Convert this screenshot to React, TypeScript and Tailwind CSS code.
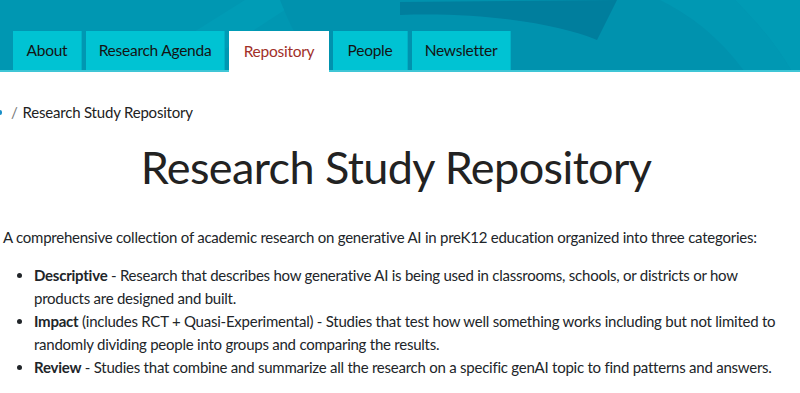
import React from "react";

const tabs = [
  { label: "About", w: "w-[69px]", active: false },
  { label: "Research Agenda", w: "w-[139px]", active: false },
  { label: "Repository", w: "w-[100px]", active: true },
  { label: "People", w: "w-[75px]", active: false },
  { label: "Newsletter", w: "w-[99px]", active: false },
];

function HeaderArt() {
  return (
    <svg className="absolute inset-0 h-full w-full" viewBox="0 0 800 72" preserveAspectRatio="none">
      <rect x="0" y="0" width="800" height="72" fill="#0097b2" />
      <path d="M130 72 L245 0 L300 0 L190 72 Z" fill="#009cb6" />
      <path d="M280 0 C290 25 300 50 330 72 L800 72 L800 0 Z" fill="#0092ae" />
      <path d="M400 2 L617 0 L597 40 C560 25 490 12 400 15 Z" fill="#007e9d" />
      <path d="M660 0 L735 0 C760 25 780 50 792 72 L745 72 C725 45 700 20 660 0 Z" fill="#0098b3" />
      <path d="M735 0 L800 0 L800 72 L792 72 C780 50 760 25 735 0 Z" fill="#009bb5" />
      <rect x="0" y="70" width="800" height="2" fill="#3fc6d6" />
    </svg>
  );
}

export default function App() {
  return (
    <div className="w-[800px] h-[393px] overflow-hidden bg-white text-[#212529]" style={{ fontFamily: "Lato, 'Open Sans', sans-serif" }}>
      <header className="relative h-[72px] flex items-end pl-[13px] gap-[4px]">
        <HeaderArt />
        {tabs.map((t) => (
          <div
            key={t.label}
            className={`relative z-10 flex items-center justify-center text-[15.5px] tracking-[-0.25px] ${t.w} ${
              t.active ? "h-[41px] bg-white text-[#a12f28]" : "h-[39px] mb-[2px] bg-[#00c3d3] text-[#141414] border-r border-[#00b2c6]"
            }`}
          >
            {t.label}
          </div>
        ))}
      </header>

      <nav className="mt-[29px] flex items-center h-[22px] text-[15px] tracking-[-0.2px] text-[#222]">
        <span className="w-[2px] h-[5px] rounded-r-full bg-[#1a8fc7]" />
        <span className="ml-[9px] text-[#777]">/</span>
        <span className="ml-[5px]">Research Study Repository</span>
      </nav>

      <h1 className="mt-[16px] pr-[8px] text-center text-[45px] leading-[56px] tracking-[-0.6px] text-[#222]">
        Research Study Repository
      </h1>

      <div className="pl-[3px] pr-[4px] text-[15px] leading-[23px] tracking-[-0.24px] text-[#212529]">
        <p className="mt-[31px]">
          A comprehensive collection of academic research on generative AI in preK12 education organized into three categories:
        </p>
        <ul className="mt-[15px] list-disc pl-[31px]">
          <li>
            <b className="font-bold">Descriptive</b> - Research that describes how generative AI is being used in classrooms, schools, or districts or how
            <br />
            products are designed and built.
          </li>
          <li>
            <b className="font-bold">Impact</b> (includes RCT + Quasi-Experimental) - Studies that test how well something works including but not limited to
            <br />
            randomly dividing people into groups and comparing the results.
          </li>
          <li>
            <b className="font-bold">Review</b> - Studies that combine and summarize all the research on a specific genAI topic to find patterns and answers.
          </li>
        </ul>
      </div>
    </div>
  );
}
